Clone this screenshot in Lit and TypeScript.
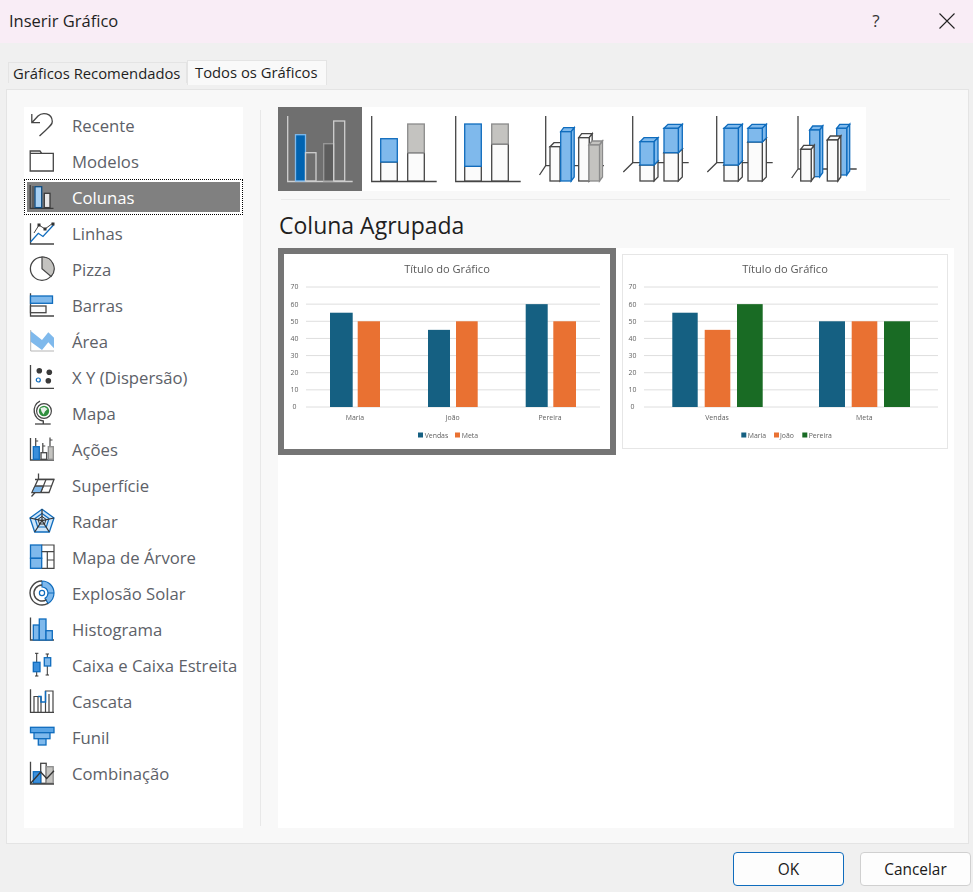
import { LitElement, html, css, svg } from "lit";
import { customElement, property } from "lit/decorators.js";

const BL = "#7fb9ec", BS = "#0f6cbd", DK = "#454545", GR = "#c4c3c0", GS = "#8b8b8b", WH = "#fbfbfb";
const SW = 1.3;

const bar = (x: number, w: number, top: number, bottom: number, fill: string, stroke: string) =>
  svg`<rect x=${x} y=${top} width=${w} height=${bottom - top} fill=${fill} stroke=${stroke} stroke-width=${SW}></rect>`;

const bar3d = (x: number, w: number, top: number, bottom: number, fill: string, stroke: string, dx = 4, dy = 4) => svg`
  <path d="M${x} ${top} l${dx} ${-dy} h${w} l${-dx} ${dy} z" fill=${fill} stroke=${stroke} stroke-width=${SW}></path>
  <path d="M${x + w} ${top} l${dx} ${-dy} V${bottom - dy} l${-dx} ${dy} z" fill=${fill} stroke=${stroke} stroke-width=${SW}></path>
  <rect x=${x} y=${top} width=${w} height=${bottom - top} fill=${fill} stroke=${stroke} stroke-width=${SW}></rect>`;

const axes = (x: number, base: number, right: number, c = DK) =>
  svg`<path d="M${x} 9 V${base} H${right}" fill="none" stroke=${c} stroke-width=${SW}></path>`;
const axes3d = (x: number, base: number, right: number, dlx: number, dly: number) =>
  svg`<path d="M${x} 9 V${base} H${right} M${x} ${base} L${dlx} ${dly}" fill="none" stroke=${DK} stroke-width=${SW}></path>`;

const THUMBS = [
  svg`<path d="M9.7 9 V74.5 H74.7" fill="none" stroke="#cfcfcf" stroke-width="1.3"></path>
      ${bar(17.5, 10, 27.7, 74, "#0063b1", "#7fb9ec")}${bar(27.5, 10.5, 45.7, 74, "none", "#cfcfcf")}
      ${bar(45.7, 10, 36.7, 74, "#5d5d5d", "#9a9a9a")}${bar(55.7, 11, 14, 74, "none", "#cfcfcf")}`,
  svg`${axes(9.7, 74.5, 74.7)}${bar(18.7, 16.6, 55, 74, WH, DK)}${bar(18.7, 16.6, 31.7, 55, BL, BS)}
      ${bar(45.7, 16.6, 45.7, 74, WH, DK)}${bar(45.7, 16.6, 17, 45.7, GR, GS)}`,
  svg`${axes(9.7, 74.5, 74.7)}${bar(18.7, 16.6, 59.3, 74, WH, DK)}${bar(18.7, 16.6, 17, 59.3, BL, BS)}
      ${bar(45.7, 16.6, 37, 74, WH, DK)}${bar(45.7, 16.6, 17, 37, GR, GS)}`,
  svg`${axes3d(15.7, 58.7, 74, 9.5, 68)}${bar3d(20, 10, 39.7, 74, WH, DK)}${bar3d(30.7, 10.5, 24.7, 74, BL, BS, 3, 4)}
      ${bar3d(48.7, 10.5, 30.7, 74, WH, DK, 3, 4)}${bar3d(59, 10.5, 38, 74, GR, GS, 3, 4)}`,
  svg`${axes3d(18.7, 55.7, 74.7, 9.3, 65)}${bar3d(26, 14, 58, 74, WH, DK)}${bar3d(26, 14, 34.7, 58, BL, BS)}
      ${bar3d(50, 14.3, 45.7, 74, WH, DK)}${bar3d(50, 14.3, 21.3, 45.7, BL, BS)}`,
  svg`${axes3d(18.7, 55.7, 74.7, 9.3, 65)}${bar3d(26, 14.3, 58, 74, WH, DK)}${bar3d(26, 14.3, 21.3, 58, BL, BS)}
      ${bar3d(50, 14.3, 35, 74, WH, DK)}${bar3d(50, 14.3, 21.3, 35, BL, BS)}`,
  svg`${axes3d(16, 62, 74.7, 9.7, 71)}${bar3d(27.7, 10, 23, 69.7, BL, BS, 3, 4)}${bar3d(54.7, 10, 21.3, 68, BL, BS, 3, 4)}
      ${bar3d(18.7, 10.5, 42.3, 74, WH, DK, 3, 4)}${bar3d(45.3, 10.5, 33, 74, WH, DK, 3, 4)}`,
];

const ax = (top: number, bot = 29, right = 26) =>
  svg`<path d="M2.5 ${top} V${bot} H${right}" fill="none" stroke=${DK} stroke-width="1.3"></path>`;

const ICONS: Record<string, unknown> = {
  Recente: svg`<path d="M3.8 7 V15.7 H12 M3.8 15.7 L10 9 C14 5 24 5.5 24.3 14.5 C24.4 18 21 20 11.5 29" fill="none" stroke=${DK} stroke-width="1.3"></path>`,
  Modelos: svg`<path d="M2.2 10.3 V28 H25.3 V10.3 H13.7 L12 8 H2.2 V10.3 H13.7" fill="none" stroke=${DK} stroke-width="1.3"></path>`,
  Colunas: svg`<path d="M2.2 6 V29.3 H25.5" fill="none" stroke="#3a3a3a" stroke-width="1.3"></path>
    <path d="M5 7 V29" stroke="#3a3a3a" fill="none"></path>
    ${bar(7, 6.7, 7.7, 28.6, "#a8d0f2", "#0f4c81")}${bar(16.3, 5.7, 14.3, 28.6, "#e8e8e8", "#3a3a3a")}`,
  Linhas: svg`${ax(8.3)}<path d="M2.5 27 L10.3 18.3 L15 21.5 L25.5 10" fill="none" stroke=${BS} stroke-width="1.3"></path>
    <path d="M6 18 L11 10 L17 14 L25 8" fill="none" stroke=${DK} stroke-width="1"></path>
    <path d="M9.5 10 h3 M15.5 14 h3 M23.5 9 h3" stroke="#333" stroke-width="3"></path>`,
  Pizza: svg`<circle cx="14" cy="17.7" r="11.6" fill="#fff" stroke=${DK} stroke-width="1.3"></circle>
    <path d="M14 6 A11.6 11.6 0 0 1 23 25.5 L14 17.7 Z" fill=${GR} stroke=${DK} stroke-width="1.2"></path>`,
  Barras: svg`${ax(6.3)}${bar(2.5, 22, 9, 16.3, BL, BS)}${bar(2.5, 15.5, 19, 25.7, WH, DK)}`,
  "Área": svg`<path d="M2.7 7 V28 H26" fill="none" stroke="#b5b5b5"></path>
    <path d="M2.7 8 L14 17 L20.3 9.3 L26 14.7 V25.3 L20.3 19.3 L14 27 L2.7 18.7 Z" fill=${BL}></path>`,
  "X Y (Dispersão)": svg`<path d="M2.5 6 V29.3 H26" fill="none" stroke=${DK} stroke-width="1.3"></path>
    <circle cx="11.3" cy="11.7" r="2.8" fill="#3a3a3a"></circle><circle cx="21.3" cy="13.3" r="2.8" fill="#3a3a3a"></circle>
    <circle cx="20.3" cy="21.7" r="2.8" fill="#3a3a3a"></circle><circle cx="10.3" cy="21" r="2" fill="#fff" stroke=${BS} stroke-width="1.2"></circle>`,
  Mapa: svg`<circle cx="16" cy="16" r="7.4" fill="#fff" stroke=${DK} stroke-width="1.2"></circle>
    <circle cx="16" cy="16" r="5.2" fill="#2f8f3e"></circle>
    <path d="M12.5 13 l4 -1 l3 2 l-2.5 2.5 l-1.5 3 l-2 -3 z" fill="#e8f0ea"></path>
    <path d="M12 6.2 A10.5 10.5 0 0 0 15.3 26 V29" fill="none" stroke=${DK} stroke-width="1.4"></path>
    <path d="M7 29 H22.7" stroke=${DK} stroke-width="1.3"></path>`,
  "Ações": svg`${ax(7)}${bar(5.3, 6, 15.7, 28.3, "#3a8fdc", BS)}${bar(13, 5.7, 21.7, 28.3, WH, DK)}${bar(20.3, 5, 15.7, 28.3, GR, GS)}
    <path d="M7.7 7 V15 M7.7 10 h2.5 M14.8 12 V21 M14.8 15 h2.5 M22 6.5 V15 M22 9 h2.5" stroke=${DK} stroke-width="1.2" fill="none"></path>`,
  "Superfície": svg`<path d="M10.5 6.5 V20 M3.5 29.5 L7.5 25 M7 12.5 H26" stroke=${DK} fill="none" stroke-width="1.3"></path>
    <path d="M4 25.5 L10 12.5 H26 L21 25.5 Z" fill="#fff" stroke=${DK} stroke-width="1.3"></path>
    <path d="M4 25.5 L7 19 H15.5 L12.8 25.5 Z" fill=${BL} stroke=${DK}></path>
    <path d="M7 19 H23.5 M12.8 25.5 L18 12.5" stroke=${DK} stroke-width="1.2" fill="none"></path>`,
  Radar: svg`<path d="M14 6.3 L26 15 L21.3 29 H6.7 L2 15 Z" fill="#cfe6f9" stroke=${BS} stroke-width="1.3"></path>
    <path d="M14 10.5 L21 15.5 L18.3 24 H9.7 L7 15.5 Z" fill="none" stroke=${BS} stroke-width="1.2"></path>
    <path d="M14 6.3 V17.7 M26 15 L14 17.7 M21.3 29 L14 17.7 M6.7 29 L14 17.7 M2 15 L14 17.7" stroke="#333" stroke-width="1.2" fill="none"></path>
    <path d="M14 13.5 L18 16.3 L16.5 21 H11.5 L10 16.3 Z" fill="none" stroke="#333" stroke-width="1"></path>`,
  "Mapa de Árvore": svg`<rect x="2.5" y="6" width="11.2" height="13.3" fill=${BL} stroke=${BS} stroke-width="1.3"></rect>
    <rect x="2.5" y="19.3" width="11.2" height="10" fill=${BL} stroke=${BS} stroke-width="1.3"></rect>
    <path d="M13.7 6 H26 V29.3 H13.7 M13.7 12.7 H26 M19.3 12.7 V29.3 M19.3 21 H26" fill="none" stroke=${DK} stroke-width="1.2"></path>`,
  "Explosão Solar": svg`<path d="M14 6 A12 12 0 0 1 26 18 A12 12 0 0 1 20 28.4 L17 23.2 A6 6 0 0 0 20 18 A6 6 0 0 0 14 12 Z" fill=${BL} stroke=${BS} stroke-width="1.2"></path>
    <path d="M26 18 H20" stroke=${BS}></path>
    <path d="M14 6 A12 12 0 1 0 20 28.4 M14 10 A8 8 0 1 0 18.5 24.6" fill="none" stroke=${DK} stroke-width="1.4"></path>
    <circle cx="14" cy="18" r="2.6" fill="#fff" stroke=${BS} stroke-width="1.2"></circle>`,
  Histograma: svg`${ax(6.5)}${bar(5.3, 6, 14, 29, BL, BS)}${bar(11.3, 6.7, 8, 29, BL, BS)}${bar(18, 6.3, 19.7, 29, BL, BS)}`,
  "Caixa e Caixa Estreita": svg`<path d="M8.7 6.3 V29 M19.3 7 V28 M7 6.3 h3.4 M7 29 h3.4 M17.6 7 h3.4 M17.6 28 h3.4" stroke="#333" fill="none"></path>
    ${bar(5.3, 6.7, 15.3, 24.7, "#3a8fdc", BS)}${bar(16.3, 6.4, 10.7, 19, BL, BS)}`,
  Cascata: svg`<path d="M2.5 6.3 V29.3 H26" fill="none" stroke=${DK} stroke-width="1.3"></path>
    <path d="M6 29 V13.5 H10 V29 M13 29 V13.5 M17.5 29 V8 H25 V29 M21 29 V11" fill="none" stroke=${DK} stroke-width="1.2"></path>
    <path d="M10 13.5 H13 V19 H17.5 V8" fill="none" stroke=${BS} stroke-width="1.5"></path>`,
  Funil: svg`${bar(2.5, 23.5, 8.3, 13.7, "#5aa5e6", BS)}${bar(6, 16, 13.7, 19.7, BL, BS)}${bar(10.3, 7.7, 19.7, 26, BL, BS)}`,
  "Combinação": svg`${bar(12.7, 5.5, 8.3, 28.3, WH, DK)}${bar(18.2, 7, 11.7, 28.3, GR, GS)}${bar(5.3, 7.4, 16.7, 28.3, "#3a8fdc", BS)}
    ${ax(6.7)}<path d="M2.5 28.5 L12.7 17 L18.7 23.5 L26 15.7" fill="none" stroke="#333" stroke-width="1.3"></path>`,
};

const ITEMS = Object.keys(ICONS);

interface Series { color: string; name: string; sx: number; tx: number; bars: [number, number, number][]; }

const CHARTS: { labels: [string, number][]; series: Series[] }[] = [
  {
    labels: [["Maria", 71], ["João", 168.7], ["Pereira", 266]],
    series: [
      { color: "#156082", name: "Vendas", sx: 134, tx: 140.7, bars: [[46, 22.7, 55], [144, 22, 45], [241.7, 22, 60]] },
      { color: "#e97132", name: "Meta", sx: 171, tx: 177.7, bars: [[73.7, 22.3, 50], [172, 21.7, 50], [269.3, 22.7, 50]] },
    ],
  },
  {
    labels: [["Vendas", 95], ["Meta", 242.3]],
    series: [
      { color: "#156082", name: "Maria", sx: 119.3, tx: 125.7, bars: [[50.3, 25.4, 55], [197, 26, 50]] },
      { color: "#e97132", name: "João", sx: 152, tx: 158, bars: [[82.7, 25.6, 45], [229.7, 25.6, 50]] },
      { color: "#196b24", name: "Pereira", sx: 180.3, tx: 186.7, bars: [[115, 25.7, 60], [262, 26, 50]] },
    ],
  },
];

@customElement("chart-preview")
class ChartPreview extends LitElement {
  @property({ type: Number }) index = 0;
  static styles = css`
    :host { display: block; width: 326px; height: 195px; box-sizing: border-box; background: #fff; }
    svg { display: block; filter: blur(0.35px); }
    text { font-family: "Open Sans", "Liberation Sans", sans-serif; fill: #595959; }
    .title { font-size: 11.1px; }
    .tick { font-size: 6.9px; fill: #5f5f5f; }
  `;
  render() {
    const c = CHARTS[this.index];
    const y0 = 153, k = 120 / 70;
    return html`<svg width="326" height="195" viewBox="0 0 326 195">
      <text class="title" x="163" y="19" text-anchor="middle">Título do Gráfico</text>
      ${[0, 10, 20, 30, 40, 50, 60, 70].map((v) => svg`
        <line x1="22" x2="316" y1=${y0 - v * k} y2=${y0 - v * k} stroke="#dedede" stroke-width="1"></line>
        <text class="tick" x="10.5" y=${y0 - v * k + 2.4} text-anchor="middle">${v}</text>`)}
      ${c.series.map((s) => s.bars.map(([x, w, v]) => svg`<rect x=${x} y=${y0 - v * k} width=${w} height=${v * k} fill=${s.color}></rect>`))}
      ${c.labels.map(([t, x]) => svg`<text class="tick" x=${x} y="165.5" text-anchor="middle">${t}</text>`)}
      ${c.series.map((s) => svg`
        <rect x=${s.sx} y="178.5" width="5" height="5" fill=${s.color}></rect>
        <text class="tick" x=${s.tx} y="183.8">${s.name}</text>`)}
    </svg>`;
  }
}

@customElement("app-root")
class AppRoot extends LitElement {
  static styles = css`
    :host {
      display: flex; flex-direction: column; width: 973px; height: 892px; background: #f0f0f0;
      font-family: "Open Sans", "Liberation Sans", sans-serif; color: #1f1f1f; overflow: hidden;
    }
    svg { display: block; flex: none; }
    .titlebar { height: 43px; box-sizing: border-box; flex: none; background: #f9edf6; display: flex; align-items: center; padding: 0 18px 2px 9px; font-size: 16.5px; }
    .titlebar .name { flex: 1; }
    .help { font-size: 17px; width: 20px; text-align: center; margin-right: 53px; color: #333; }
    .tabs { height: 46px; box-sizing: border-box; flex: none; display: flex; align-items: flex-end; padding: 0 0 4px 8px; font-size: 14.8px; }
    .tab { box-sizing: border-box; display: flex; align-items: center; white-space: nowrap; }
    .tab.off { width: 179px; height: 21px; margin-bottom: 2px; padding-left: 4px; border: 1px solid #e4e4e4; border-bottom: none; }
    .tab.on { width: 140px; height: 25px; padding-left: 7px; padding-bottom: 2px; background: #f9f9f9; border: 1px solid #e4e4e4; border-bottom: none; }
    .panel {
      flex: 1; box-sizing: border-box; margin: 0 4px 0 6px; background: #f8f8f8; border: 1px solid #e4e4e4;
      display: flex; padding: 17px 14px 15px 17px; min-height: 0;
    }
    .list { width: 219px; flex: none; background: #fff; display: flex; flex-direction: column; }
    .item { height: 36px; flex: none; display: flex; align-items: center; gap: 16px; padding-left: 4px; font-size: 16.7px; color: #5d6168; white-space: nowrap; }
    .item.sel { background: #808080; color: #fff; box-shadow: inset 0 0 0 3px #fff; outline: 1px dotted #000; outline-offset: -1px; }
    .rule { width: 1px; background: #e8e8e8; margin: 3px 17px 2px; flex: none; }
    .main { flex: 1; display: flex; flex-direction: column; min-width: 0; }
    .thumbs { display: flex; width: 588px; background: #fff; flex: none; }
    .thumb { width: 84px; height: 84px; }
    .thumb.sel { background: #6f6f6f; }
    .hr { height: 1px; background: #ebebeb; margin: 8px 4px 0 3px; flex: none; }
    h2 { margin: 0; font-weight: 400; font-size: 23px; height: 48px; line-height: 50px; color: #1f1f1f; flex: none; padding-left: 1px; }
    .previews { flex: 1; background: #fff; display: flex; align-items: flex-start; gap: 6px; }
    .pv { box-sizing: border-box; }
    .pv.sel { border: 6px solid #757575; width: 338px; height: 207px; }
    .pv.plain { margin-top: 6px; outline: 1px solid #e6e6e6; outline-offset: -1px; }
    .footer { height: 48px; box-sizing: border-box; flex: none; display: flex; gap: 16px; justify-content: flex-end; align-items: center; padding: 2px 2px 0 0; }
    .btn { box-sizing: border-box; width: 111px; height: 34px; border-radius: 4px; background: #fdfdfd; border: 1px solid #d0d0d0; font-size: 15.4px; display: flex; align-items: center; justify-content: center; color: #1a1a1a; }
    .btn.ok { border: 1.5px solid #0f6cbd; }
  `;
  render() {
    return html`
      <div class="titlebar">
        <span class="name">Inserir Gráfico</span>
        <span class="help">?</span>
        <svg width="16" height="16" viewBox="0 0 16 16"><path d="M0.5 0.5 L15.5 15.5 M15.5 0.5 L0.5 15.5" stroke="#222" stroke-width="1.1" fill="none"></path></svg>
      </div>
      <div class="tabs">
        <div class="tab off">Gráficos Recomendados</div>
        <div class="tab on">Todos os Gráficos</div>
      </div>
      <div class="panel">
        <div class="list">
          ${ITEMS.map((n) => html`
            <div class="item ${n === "Colunas" ? "sel" : ""}">
              <svg width="28" height="36" viewBox="0 0 28 36">${ICONS[n]}</svg><span>${n}</span>
            </div>`)}
        </div>
        <div class="rule"></div>
        <div class="main">
          <div class="thumbs">
            ${THUMBS.map((t, i) => html`<svg class="thumb ${i === 0 ? "sel" : ""}" viewBox="0 0 84 84">${t}</svg>`)}
          </div>
          <div class="hr"></div>
          <h2>Coluna Agrupada</h2>
          <div class="previews">
            <div class="pv sel"><chart-preview index="0"></chart-preview></div>
            <div class="pv plain"><chart-preview index="1"></chart-preview></div>
          </div>
        </div>
      </div>
      <div class="footer">
        <div class="btn ok">OK</div>
        <div class="btn">Cancelar</div>
      </div>`;
  }
}
